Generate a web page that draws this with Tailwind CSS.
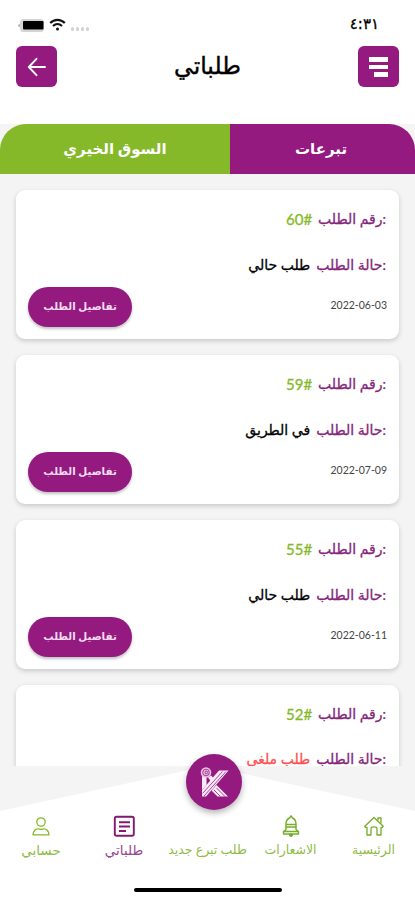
<!DOCTYPE html>
<html lang="ar">
<head>
    <meta charset="UTF-8">
    <meta name="viewport" content="width=device-width, initial-scale=1.0">
    <title>طلباتي</title>
    <script src="https://cdn.jsdelivr.net/npm/@tailwindcss/browser@4"></script>
</head>
<body class="bg-white font-['Lato','DejaVu_Sans',sans-serif] overflow-hidden">
    <div class="w-[415px] h-[900px] flex flex-col overflow-hidden">

        <!-- Status bar -->
        <div class="h-[46px] shrink-0 flex items-start justify-between pl-[18px] pr-[36px] pt-[17px]">
            <div class="flex items-start">
                <svg class="mt-[1px]" width="28" height="15" viewBox="0 0 28 15">
                    <path d="M3 5.500C1.300 5.500 0 6.500 0 7.500s1.300 2 3 2z" fill="#bbb"/>
                    <rect x="2" y="1" width="24" height="13" rx="3.500" fill="#d4d4d4"/>
                    <rect x="5" y="3" width="20.500" height="8.500" rx="1" fill="#000"/>
                </svg>
                <svg class="ml-[3px] mt-[1px]" width="17" height="13" viewBox="0 0 17 13" fill="none" stroke="#111" stroke-width="2.200">
                    <path d="M1.200 5C5.400.700 11.600.700 15.800 5"/>
                    <path d="M4 8c2.700-2.600 6.300-2.600 9 0"/>
                    <circle cx="8.500" cy="11" r="1.500" fill="#111" stroke="none"/>
                </svg>
                <div class="flex gap-[2px] ml-[5px] mt-[10px]">
                    <span class="w-[3px] h-[4px] rounded-sm bg-[#d2d2d2]"></span>
                    <span class="w-[3px] h-[4px] rounded-sm bg-[#d2d2d2]"></span>
                    <span class="w-[3px] h-[4px] rounded-sm bg-[#d2d2d2]"></span>
                    <span class="w-[3px] h-[4px] rounded-sm bg-[#d2d2d2]"></span>
                </div>
            </div>
            <span class="text-[15px] leading-[15px] font-['DejaVu_Sans',sans-serif] [-webkit-text-stroke:0.3px]">٤:٣١</span>
        </div>

        <!-- Header -->
        <div class="h-[78px] shrink-0 flex items-start justify-between px-4">
            <button class="w-[41px] h-[41px] rounded-md bg-[#941a80] flex items-center justify-center">
                <svg width="20" height="20" viewBox="0 0 20 20" fill="none" stroke="#fff" stroke-width="1.900" stroke-linecap="round" stroke-linejoin="round">
                    <path d="M18 10H2M9.500 1.800 1.800 10l7.700 8.200"/>
                </svg>
            </button>
            <h1 class="text-[23.5px] leading-[39px] [-webkit-text-stroke:0.4px]">طلباتي</h1>
            <button class="w-[41px] h-[41px] rounded-md bg-[#941a80] flex flex-col items-end justify-center gap-[3px] pr-[11px]">
                <span class="w-[19px] h-[5px] bg-white"></span>
                <span class="w-[19px] h-[4px] bg-white"></span>
                <span class="w-[14px] h-[5px] bg-white"></span>
            </button>
        </div>

        <!-- Tabs -->
        <div class="h-[50px] shrink-0 bg-[#f4f4f4]">
            <div class="h-full flex rounded-t-[26px] overflow-hidden text-white font-bold text-[15px] leading-[48px] text-center">
                <div class="w-[230px] bg-[#85b929]">السوق الخيري</div>
                <div class="flex-1 bg-[#941a80] pr-[3px]">تبرعات</div>
            </div>
        </div>

        <!-- Orders list -->
        <div class="h-[592px] shrink-0 overflow-hidden bg-[#f4f4f4] px-4 pt-4 flex flex-col gap-4">
            <div class="h-[149px] shrink-0 rounded-[9px] bg-white shadow-[0_2px_5px_rgba(0,0,0,0.18)] pl-3 pr-[13px] pt-[18px]">
                <div class="flex justify-end text-[14px] leading-[22px] [-webkit-text-stroke:0.3px]">
                    <span class="text-[#85b929] text-[15px] mr-[6px]">60#</span>
                    <span class="text-[#84247a]">رقم الطلب</span>
                    <span class="text-[#84247a]">:</span>
                </div>
                <div class="flex justify-end text-[14px] leading-[22px] mt-[24px] [-webkit-text-stroke:0.3px]">
                    <span class="mr-[6px]">طلب حالي</span>
                    <span class="text-[#84247a]">حالة الطلب</span>
                    <span class="text-[#84247a]">:</span>
                </div>
                <div class="flex items-start justify-between mt-[11px]">
                    <button class="w-[104px] h-10 rounded-full bg-[#941a80] text-[#f3dcef] text-[10.3px] font-bold shadow-[0_2px_3px_rgba(0,0,0,0.25)]">تفاصيل الطلب</button>
                    <span class="text-[10.5px] text-[#444] mt-[11px] mr-[-1px]">2022-06-03</span>
                </div>
            </div>
            <div class="h-[149px] shrink-0 rounded-[9px] bg-white shadow-[0_2px_5px_rgba(0,0,0,0.18)] pl-3 pr-[13px] pt-[18px]">
                <div class="flex justify-end text-[14px] leading-[22px] [-webkit-text-stroke:0.3px]">
                    <span class="text-[#85b929] text-[15px] mr-[6px]">59#</span>
                    <span class="text-[#84247a]">رقم الطلب</span>
                    <span class="text-[#84247a]">:</span>
                </div>
                <div class="flex justify-end text-[14px] leading-[22px] mt-[24px] [-webkit-text-stroke:0.3px]">
                    <span class="mr-[6px]">في الطريق</span>
                    <span class="text-[#84247a]">حالة الطلب</span>
                    <span class="text-[#84247a]">:</span>
                </div>
                <div class="flex items-start justify-between mt-[11px]">
                    <button class="w-[104px] h-10 rounded-full bg-[#941a80] text-[#f3dcef] text-[10.3px] font-bold shadow-[0_2px_3px_rgba(0,0,0,0.25)]">تفاصيل الطلب</button>
                    <span class="text-[10.5px] text-[#444] mt-[11px] mr-[-1px]">2022-07-09</span>
                </div>
            </div>
            <div class="h-[149px] shrink-0 rounded-[9px] bg-white shadow-[0_2px_5px_rgba(0,0,0,0.18)] pl-3 pr-[13px] pt-[18px]">
                <div class="flex justify-end text-[14px] leading-[22px] [-webkit-text-stroke:0.3px]">
                    <span class="text-[#85b929] text-[15px] mr-[6px]">55#</span>
                    <span class="text-[#84247a]">رقم الطلب</span>
                    <span class="text-[#84247a]">:</span>
                </div>
                <div class="flex justify-end text-[14px] leading-[22px] mt-[24px] [-webkit-text-stroke:0.3px]">
                    <span class="mr-[6px]">طلب حالي</span>
                    <span class="text-[#84247a]">حالة الطلب</span>
                    <span class="text-[#84247a]">:</span>
                </div>
                <div class="flex items-start justify-between mt-[11px]">
                    <button class="w-[104px] h-10 rounded-full bg-[#941a80] text-[#f3dcef] text-[10.3px] font-bold shadow-[0_2px_3px_rgba(0,0,0,0.25)]">تفاصيل الطلب</button>
                    <span class="text-[10.5px] text-[#444] mt-[11px] mr-[-1px]">2022-06-11</span>
                </div>
            </div>
            <div class="h-[149px] shrink-0 rounded-[9px] bg-white shadow-[0_2px_5px_rgba(0,0,0,0.18)] pl-3 pr-[13px] pt-[18px]">
                <div class="flex justify-end text-[14px] leading-[22px] [-webkit-text-stroke:0.3px]">
                    <span class="text-[#85b929] text-[15px] mr-[6px]">52#</span>
                    <span class="text-[#84247a]">رقم الطلب</span>
                    <span class="text-[#84247a]">:</span>
                </div>
                <div class="flex justify-end text-[14px] leading-[20px] mt-[24px] [-webkit-text-stroke:0.3px]">
                    <span class="mr-[6px] text-[#ff4f4f]">طلب ملغى</span>
                    <span class="text-[#84247a]">حالة الطلب</span>
                    <span class="text-[#84247a]">:</span>
                </div>
            </div>
        </div>

        <!-- Bottom navigation -->
        <div class="relative h-[134px] shrink-0 bg-white">
            <svg class="block" width="415" height="45" viewBox="0 0 415 45">
                <path d="M0 0h415v45L207 0 0 45z" fill="#f4f4f4"/>
            </svg>
            <!-- Floating logo button -->
            <div class="absolute left-[186px] top-[-12px] w-[56px] h-[56px] rounded-full bg-[#941a80] shadow-[0_3px_6px_rgba(0,0,0,0.3)] flex items-center justify-center">
                <svg width="40" height="40" viewBox="0 0 40 40" fill="none">
                    <path d="M8 13h4.500v10L8 28z" fill="#fbeaf8"/>
                    <path d="M25 8.500h9.500L12 34.500H8V28z" fill="#fbeaf8"/>
                    <path d="M17.500 28.500l5-5.500L34 34.500H23.500z" fill="#fbeaf8"/>
                    <path d="M14 15.500l3-2 4 4-3 3.500z" fill="#fbeaf8"/>
                    <circle cx="12" cy="10.500" r="5.300" fill="#e9bfe2"/>
                    <circle cx="12" cy="10.500" r="3.300" stroke="#941a80" stroke-width=".8"/>
                    <circle cx="12.300" cy="10.500" r="1.300" stroke="#941a80" stroke-width=".8"/>
                    <path d="M28.500 9.500 8.500 31.500M32 9.500 10 34M22.500 26l8.500 8.500M20 28l6.500 6.500" stroke="#941a80" stroke-width=".8"/>
                </svg>
            </div>
            <div class="grid grid-cols-[82px_84px_83px_83px_83px] h-[60px] pt-[3px] text-[12.5px] leading-4 text-[#8fbb46] whitespace-nowrap">
                <div class="flex flex-col items-center">
                    <svg width="24" height="24" viewBox="0 0 24 24" fill="none" stroke="#85b929" stroke-width="1.300">
                        <circle cx="12" cy="8" r="4.200"/>
                        <path d="M4 20.800c0-3.600 2.500-6 5-6 1 0 1.800.500 3 .500s2-.500 3-.500c2.500 0 5 2.400 5 6z" stroke-linejoin="round"/>
                    </svg>
                    <span class="mt-[4px] text-[13.5px]">حسابي</span>
                </div>
                <div class="flex flex-col items-center text-[#99468b]">
                    <svg width="24" height="24" viewBox="0 0 24 24" fill="none" stroke="#84186f" stroke-width="1.900">
                        <rect x="2.800" y="2.800" width="19" height="19" rx="1.800"/>
                        <path d="M7 8.200h11M7 12.500h11M7 17h7"/>
                    </svg>
                    <span class="mt-[4px] text-[13.5px]">طلباتي</span>
                </div>
                <div class="flex flex-col items-center">
                    <span class="mt-[28px]">طلب تبرع جديد</span>
                </div>
                <div class="flex flex-col items-center">
                    <svg width="24" height="24" viewBox="0 0 24 24" fill="none" stroke="#75ad29" stroke-width="1.400" stroke-linejoin="round">
                        <path d="M12 1.800 10.500 4C7.800 5.300 7 7.500 7 10v3h10v-3c0-2.500-.800-4.700-3.500-6z"/>
                        <path d="M7 10.500h10M7 13v2.500l-2.500 2V20h15v-2.500l-2.500-2V13M5 17.500h14"/>
                        <path d="M10.500 20.500c0 2.300 3 2.300 3 0z" fill="#75ad29"/>
                    </svg>
                    <span class="mt-[4px]">الاشعارات</span>
                </div>
                <div class="flex flex-col items-center">
                    <svg width="24" height="24" viewBox="0 0 24 24" fill="none" stroke="#75ad29" stroke-width="1.300" stroke-linejoin="round">
                        <path d="M2.800 12.300 12 3.500l9.200 8.800-1 1.200H19v7.500h-4v-6.500c0-1-1-1.700-3-1.700s-3 .700-3 1.700V21H5v-7.500H3.800z"/>
                        <path d="M16 6.500V4h3v5.500"/>
                    </svg>
                    <span class="mt-[4px]">الرئيسية</span>
                </div>
            </div>
            <div class="mx-auto mt-[17px] w-[148px] h-[4px] rounded-full bg-black"></div>
        </div>
    </div>
</body>
</html>
